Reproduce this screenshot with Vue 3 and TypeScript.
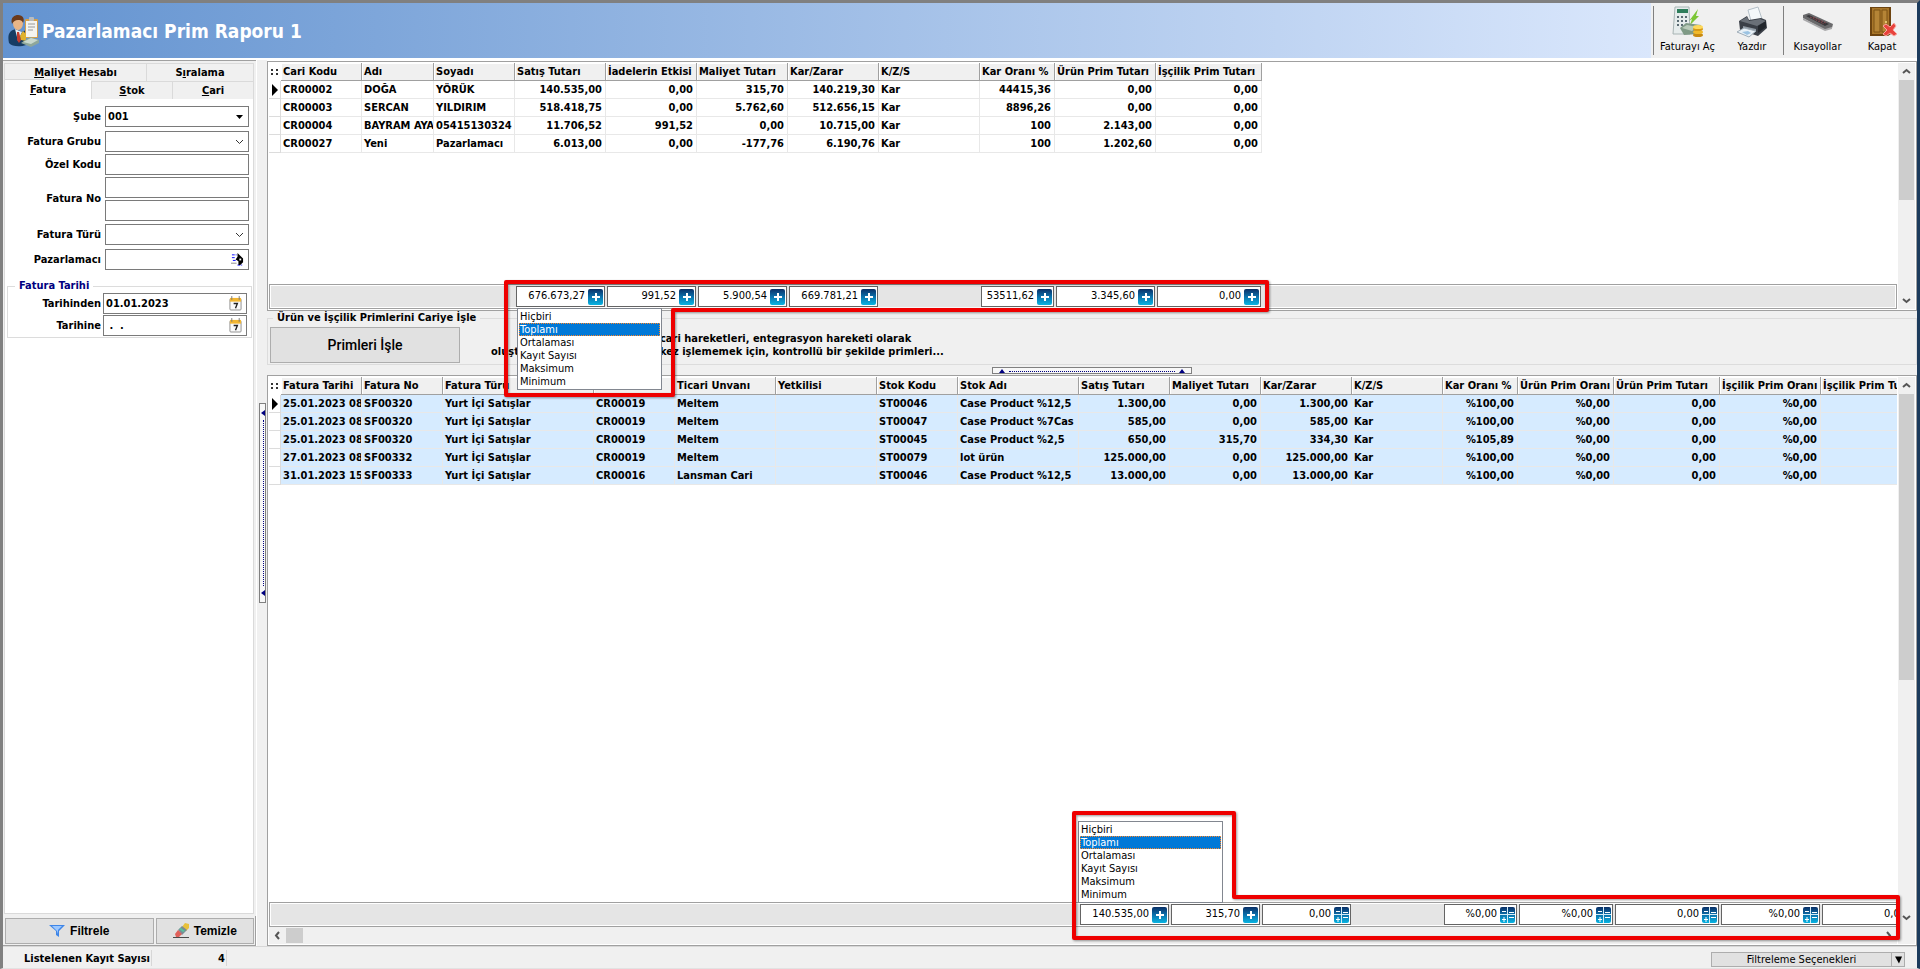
<script setup lang="ts">
import { ref } from 'vue'

interface Column {
  title: string
  width: number
  numeric?: boolean
  total?: string
  mode?: 'sum' | 'none'
}

const summaryOptions: string[] = ['Hiçbiri', 'Toplamı', 'Ortalaması', 'Kayıt Sayısı', 'Maksimum', 'Minimum']
const upperSummary = ref('Toplamı')
const lowerSummary = ref('Toplamı')
const branch = ref('001')
const startDate = ref('01.01.2023')
const endDate = ref(' .  .')

const sellerColumns: Column[] = [
  { title: 'Cari Kodu', width: 81 },
  { title: 'Adı', width: 72 },
  { title: 'Soyadı', width: 81 },
  { title: 'Satış Tutarı', width: 91, numeric: true, total: '676.673,27', mode: 'sum' },
  { title: 'İadelerin Etkisi', width: 91, numeric: true, total: '991,52', mode: 'sum' },
  { title: 'Maliyet Tutarı', width: 91, numeric: true, total: '5.900,54', mode: 'sum' },
  { title: 'Kar/Zarar', width: 91, numeric: true, total: '669.781,21', mode: 'sum' },
  { title: 'K/Z/S', width: 101 },
  { title: 'Kar Oranı %', width: 75, numeric: true, total: '53511,62', mode: 'sum' },
  { title: 'Ürün Prim Tutarı', width: 101, numeric: true, total: '3.345,60', mode: 'sum' },
  { title: 'İşçilik Prim Tutarı', width: 106, numeric: true, total: '0,00', mode: 'sum' },
]

const sellerRows: string[][] = [
  ['CR00002', 'DOĞA', 'YÖRÜK', '140.535,00', '0,00', '315,70', '140.219,30', 'Kar', '44415,36', '0,00', '0,00'],
  ['CR00003', 'SERCAN', 'YILDIRIM', '518.418,75', '0,00', '5.762,60', '512.656,15', 'Kar', '8896,26', '0,00', '0,00'],
  ['CR00004', 'BAYRAM AYAZ', '05415130324', '11.706,52', '991,52', '0,00', '10.715,00', 'Kar', '100', '2.143,00', '0,00'],
  ['CR00027', 'Yeni', 'Pazarlamacı', '6.013,00', '0,00', '-177,76', '6.190,76', 'Kar', '100', '1.202,60', '0,00'],
]

const invoiceColumns: Column[] = [
  { title: 'Fatura Tarihi', width: 81 },
  { title: 'Fatura No', width: 81 },
  { title: 'Fatura Türü', width: 151 },
  { title: 'Cari Kodu', width: 81 },
  { title: 'Ticari Unvanı', width: 101 },
  { title: 'Yetkilisi', width: 101 },
  { title: 'Stok Kodu', width: 81 },
  { title: 'Stok Adı', width: 121 },
  { title: 'Satış Tutarı', width: 91, numeric: true, total: '140.535,00', mode: 'sum' },
  { title: 'Maliyet Tutarı', width: 91, numeric: true, total: '315,70', mode: 'sum' },
  { title: 'Kar/Zarar', width: 91, numeric: true, total: '0,00', mode: 'none' },
  { title: 'K/Z/S', width: 91 },
  { title: 'Kar Oranı %', width: 75, numeric: true, total: '%0,00', mode: 'none' },
  { title: 'Ürün Prim Oranı', width: 96, numeric: true, total: '%0,00', mode: 'none' },
  { title: 'Ürün Prim Tutarı', width: 106, numeric: true, total: '0,00', mode: 'none' },
  { title: 'İşçilik Prim Oranı', width: 101, numeric: true, total: '%0,00', mode: 'none' },
  { title: 'İşçilik Prim Tutarı', width: 106, numeric: true, total: '0,00', mode: 'none' },
]

const invoiceRows: string[][] = [
  ['25.01.2023 08:51', 'SF00320', 'Yurt İçi Satışlar', 'CR00019', 'Meltem', '', 'ST00046', 'Case Product %12,5', '1.300,00', '0,00', '1.300,00', 'Kar', '%100,00', '%0,00', '0,00', '%0,00', '0,00'],
  ['25.01.2023 08:51', 'SF00320', 'Yurt İçi Satışlar', 'CR00019', 'Meltem', '', 'ST00047', 'Case Product %7Cas', '585,00', '0,00', '585,00', 'Kar', '%100,00', '%0,00', '0,00', '%0,00', '0,00'],
  ['25.01.2023 08:51', 'SF00320', 'Yurt İçi Satışlar', 'CR00019', 'Meltem', '', 'ST00045', 'Case Product %2,5', '650,00', '315,70', '334,30', 'Kar', '%105,89', '%0,00', '0,00', '%0,00', '0,00'],
  ['27.01.2023 08:51', 'SF00332', 'Yurt İçi Satışlar', 'CR00019', 'Meltem', '', 'ST00079', 'lot ürün', '125.000,00', '0,00', '125.000,00', 'Kar', '%100,00', '%0,00', '0,00', '%0,00', '0,00'],
  ['31.01.2023 15:20', 'SF00333', 'Yurt İçi Satışlar', 'CR00016', 'Lansman Cari', '', 'ST00046', 'Case Product %12,5', '13.000,00', '0,00', '13.000,00', 'Kar', '%100,00', '%0,00', '0,00', '%0,00', '0,00'],
]

const grids = [
  { id: 'sellers', columns: sellerColumns, rows: sellerRows },
  { id: 'invoices', columns: invoiceColumns, rows: invoiceRows },
]

function tableWidth(columns: Column[]): number {
  return columns.reduce((sum, c) => sum + c.width, 12)
}
</script>

<template>
  <div class="window">
    <header class="titlebar">
      <div class="caption">
        <svg class="caption-icon" viewBox="0 0 32 32" aria-hidden="true">
          <path d="M1 28c-2-9 1-13 7-14l6 3 4-2v15c-5 2-14 2-17-2z" fill="#173c63" />
          <path d="M7 14l3 12 4-9z" fill="#e8edf2" />
          <path d="M9 17h2l2 8-2 3-2-3z" fill="#c23b2e" />
          <ellipse cx="10" cy="8" rx="5" ry="7" fill="#e9b587" />
          <path d="M4 9C2 2 7 0 10 0c5 0 7 4 5 8-1-3-3-3-5-3-3 0-4 1-6 4z" fill="#6b3a1b" />
          <rect x="17" y="4" width="13" height="19" rx="1" fill="#d6a04a" />
          <rect x="18" y="6" width="11" height="16" fill="#f4f4f0" />
          <rect x="21" y="2" width="5" height="4" rx="1" fill="#b8bcc0" />
          <path d="M20 9h7M20 12h7M20 15h5" stroke="#9a9a9a" />
          <path d="M12 21l3-5 3 3v7l-5-1z" fill="#e0b22c" />
          <path d="M13 28l9-6 9 3v3l-8 4z" fill="#8fa79a" />
          <path d="M15 27l8-4 7 2-7 4z" fill="#c9d8ce" />
        </svg>
        <h1>Pazarlamacı Prim Raporu 1</h1>
      </div>
      <nav class="toolbar">
        <button type="button" class="tool first">
          <svg viewBox="0 0 32 32" aria-hidden="true">
            <path d="M3 1h14l1 27H1z" fill="#e6ecec" stroke="#a8b4b4" />
            <rect x="5" y="3" width="11" height="4" fill="#2e7d5b" />
            <path d="M5 11h2M9 11h2M13 11h2M5 15h2M9 15h2M13 15h2M5 19h2M9 19h2" stroke="#5b6b73" stroke-width="2" />
            <path d="M17 15l9-12-2 7h3l-9 9 2-6z" fill="#7cc636" />
            <path d="M8 22l6-5 15 2-3 9-14 1z" fill="#7f9a86" />
            <path d="M10 22l5-3 10 2-5 4z" fill="#b9cbb9" />
            <ellipse cx="26" cy="29" rx="5" ry="2" fill="#c88a10" />
            <ellipse cx="26" cy="26" rx="5" ry="2" fill="#f0b92a" />
            <ellipse cx="26" cy="23" rx="5" ry="2" fill="#d79a16" />
            <ellipse cx="26" cy="21" rx="5" ry="2" fill="#ffd95a" />
          </svg>
          <span>Faturayı Aç</span>
        </button>
        <button type="button" class="tool">
          <svg viewBox="0 0 32 32" aria-hidden="true">
            <path d="M12 4l10-3 4 12-11 2z" fill="#f4f8fa" stroke="#b5c0c8" />
            <path d="M3 15l8-5 2 4 12-2 5 2 1 8-9 8-18-6z" fill="#3a3f47" />
            <path d="M4 15l7-4 2 4 11-2 6 2-9 5z" fill="#6a7078" />
            <path d="M22 20l8-5v6l-8 6z" fill="#22262c" />
            <path d="M7 20l13 3v2L7 22z" fill="#8f98a2" />
            <path d="M1 26l7-4 12 3-7 6z" fill="#e9f1f7" stroke="#9fadb8" />
            <path d="M6 26l6-1 3 2-4 2z" fill="#9cc3e2" />
          </svg>
          <span>Yazdır</span>
        </button>
        <button type="button" class="tool apart">
          <svg viewBox="0 0 32 32" aria-hidden="true">
            <path d="M1 9l6-2 24 11-1 4-7 2L1 12z" fill="#6a6a6c" />
            <path d="M4 10l3-1 20 9-4 2z" fill="#37373a" />
            <path d="M8 11l14 7M11 11l13 6" stroke="#8a4a50" stroke-dasharray="2 1" />
            <path d="M1 12l22 11 7-2v2l-7 2L1 14z" fill="#a9a9ab" />
          </svg>
          <span>Kısayollar</span>
        </button>
        <button type="button" class="tool">
          <svg viewBox="0 0 32 32" aria-hidden="true">
            <path d="M4 1h21v27l-3 2H4z" fill="#6d4410" />
            <path d="M6 2h17v26H6z" fill="#a8762a" />
            <path d="M8 4h6v22H8zM16 4h5v22h-5z" fill="#b58436" stroke="#7c5215" />
            <circle cx="20" cy="16" r="1" fill="#f4dc84" />
            <path d="M17 20l3-2 4 3 4-4 2 3-3 4 4 4-3 2-4-3-4 3-3-2 4-4z" fill="#e8433c" stroke="#f8a49e" />
          </svg>
          <span>Kapat</span>
        </button>
      </nav>
    </header>

    <main class="body">
      <aside class="filters">
        <div class="tabs" role="tablist">
          <div class="tab-row">
            <button type="button" role="tab" class="tab wide"><u>M</u>aliyet Hesabı</button>
            <button type="button" role="tab" class="tab">S<u>ı</u>ralama</button>
          </div>
          <div class="tab-row">
            <button type="button" role="tab" class="tab active" aria-selected="true"><u>F</u>atura</button>
            <button type="button" role="tab" class="tab"><u>S</u>tok</button>
            <button type="button" role="tab" class="tab"><u>C</u>ari</button>
          </div>
        </div>
        <form class="sheet" @submit.prevent>
          <div class="field">
            <label for="sube">Şube</label>
            <div class="box">
              <select id="sube" v-model="branch"><option>001</option></select>
              <svg class="arrow" viewBox="0 0 9 9" aria-hidden="true"><path d="M1 3h7L4.500 7z" fill="#000" /></svg>
            </div>
          </div>
          <div class="field spaced">
            <label for="grup">Fatura Grubu</label>
            <div class="box">
              <select id="grup"><option></option></select>
              <svg class="arrow" viewBox="0 0 9 9" aria-hidden="true"><path d="M1 3l3.500 3.500L8 3" fill="none" stroke="#333" /></svg>
            </div>
          </div>
          <div class="field">
            <label for="ozel">Özel Kodu</label>
            <div class="box"><input id="ozel" type="text" /></div>
          </div>
          <div class="field range">
            <label for="no1">Fatura No</label>
            <div class="pair">
              <div class="box"><input id="no1" type="text" /></div>
              <div class="box"><input type="text" aria-label="Fatura No" /></div>
            </div>
          </div>
          <div class="field">
            <label for="turu">Fatura Türü</label>
            <div class="box">
              <select id="turu"><option></option></select>
              <svg class="arrow" viewBox="0 0 9 9" aria-hidden="true"><path d="M1 3l3.500 3.500L8 3" fill="none" stroke="#333" /></svg>
            </div>
          </div>
          <div class="field spaced">
            <label for="pazarlamaci">Pazarlamacı</label>
            <div class="box">
              <input id="pazarlamaci" type="text" />
              <button type="button" class="inner" aria-label="Seç">
                <svg viewBox="0 0 14 14" aria-hidden="true">
                  <path d="M1 2h5M1 5h3M2 8h3M7 13h5" stroke="#00f" stroke-dasharray="3 1" />
                  <path d="M0 11h6" stroke="#888" />
                  <path d="M7 0l3 3 3 3v4l-3 3H8V9L5 7l2-3z" fill="#000" />
                  <path d="M9 6h2v2H9z" fill="#fff" />
                </svg>
              </button>
            </div>
          </div>
          <fieldset class="dates">
            <legend>Fatura Tarihi</legend>
            <div class="field">
              <label for="from">Tarihinden</label>
              <div class="box">
                <input id="from" v-model="startDate" type="text" />
                <button type="button" class="inner" aria-label="Takvim">
                  <svg viewBox="0 0 14 16" aria-hidden="true">
                    <rect x="1" y="3" width="12" height="12" rx="1" fill="#fafafa" stroke="#8b8b8b" />
                    <path d="M1 2h12v4H1z" fill="#f2b632" />
                    <path d="M3 0v4M11 0v4" stroke="#777" />
                    <path d="M5 8h4L7 13" fill="none" stroke="#222" stroke-width="1.500" />
                  </svg>
                </button>
              </div>
            </div>
            <div class="field">
              <label for="to">Tarihine</label>
              <div class="box">
                <input id="to" v-model="endDate" type="text" />
                <button type="button" class="inner" aria-label="Takvim">
                  <svg viewBox="0 0 14 16" aria-hidden="true">
                    <rect x="1" y="3" width="12" height="12" rx="1" fill="#fafafa" stroke="#8b8b8b" />
                    <path d="M1 2h12v4H1z" fill="#f2b632" />
                    <path d="M3 0v4M11 0v4" stroke="#777" />
                    <path d="M5 8h4L7 13" fill="none" stroke="#222" stroke-width="1.500" />
                  </svg>
                </button>
              </div>
            </div>
          </fieldset>
        </form>
        <div class="actions">
          <button type="button" class="action filter">
            <svg viewBox="0 0 16 16" aria-hidden="true">
              <path d="M0 2h16l-6 6v6l-3-2V8z" fill="#3f86e8" />
              <path d="M3 3h10L9 7v4L8 8z" fill="#9cc8ff" />
            </svg>
            Filtrele
          </button>
          <button type="button" class="action">
            <svg viewBox="0 0 16 16" aria-hidden="true">
              <path d="M0 14h16v1H0z" fill="#4a4a4a" />
              <path d="M12 0l4 1v4l-3 3-4-4z" fill="#e8c13a" />
              <path d="M9 3l5 4-5 5-4-5z" fill="#7c8a94" />
              <path d="M8 5l4 3-2 1-4-3z" fill="#57c4a0" />
              <path d="M5 7l4 4-3 3H3l-1-3z" fill="#e0605a" />
            </svg>
            Temizle
          </button>
        </div>
      </aside>

      <div class="splitter">
        <button type="button" class="grip upright" aria-label="Paneli gizle">
          <svg viewBox="0 0 4 6" aria-hidden="true"><path d="M4 0v6L0 3z" fill="#000080" /></svg>
          <i></i>
          <svg viewBox="0 0 4 6" aria-hidden="true"><path d="M4 0v6L0 3z" fill="#000080" /></svg>
        </button>
      </div>

      <div class="content">
        <section v-for="grid in grids" :key="grid.id" class="grid-panel" :class="grid.id">
          <div class="grid-main">
            <div class="viewport">
              <table :style="{ width: tableWidth(grid.columns) + 'px' }">
                <colgroup>
                  <col class="mark-col" />
                  <col v-for="c in grid.columns" :key="c.title" :style="{ width: c.width + 'px' }" />
                </colgroup>
                <thead>
                  <tr>
                    <th class="corner">
                      <svg viewBox="0 0 8 8" aria-hidden="true">
                        <path d="M0 1h2v2H0zM5 1h2v2H5zM0 5h2v2H0zM5 5h2v2H5z" fill="#333" />
                      </svg>
                    </th>
                    <th v-for="c in grid.columns" :key="c.title" scope="col">{{ c.title }}</th>
                  </tr>
                </thead>
                <tbody>
                  <tr v-for="(row, r) in grid.rows" :key="r">
                    <td class="mark">
                      <svg v-if="r === 0" viewBox="0 0 6 12" aria-hidden="true"><path d="M0 0l6 6-6 6z" fill="#000" /></svg>
                    </td>
                    <td v-for="(cell, i) in row" :key="i" :class="{ num: grid.columns[i].numeric }">{{ cell }}</td>
                  </tr>
                </tbody>
              </table>
            </div>
            <div class="totals">
              <div v-for="c in grid.columns" :key="c.title" class="total-cell" :style="{ width: c.width + 'px' }">
                <div v-if="c.total" class="total">
                  <input type="text" :value="c.total" :aria-label="c.title" readonly />
                  <button type="button" :aria-label="c.title + ' özeti'">
                    <svg viewBox="0 0 15 16" aria-hidden="true">
                      <defs>
                        <linearGradient id="tile" x1="0" y1="0" x2="0" y2="1">
                          <stop offset="0" stop-color="#0a2f66" />
                          <stop offset="0.5" stop-color="#0b73ae" />
                          <stop offset="1" stop-color="#08b4e2" />
                        </linearGradient>
                      </defs>
                      <rect width="15" height="16" rx="2" fill="url(#tile)" />
                      <path v-if="c.mode === 'sum'" d="M4 8h8M8 4v8" stroke="#fff" stroke-width="2" />
                      <g v-else stroke="#fff">
                        <path d="M0 7.500h15M7.500 0v16" stroke="#d4ecf6" />
                        <path d="M2 4.500h4M2 12.500h4M4 10v5M9 5.500h5M9 10.500h5" />
                      </g>
                    </svg>
                  </button>
                </div>
              </div>
            </div>
            <div v-if="grid.id === 'invoices'" class="hbar">
              <svg viewBox="0 0 9 9" aria-hidden="true"><path d="M6 1L3 4.500 6 8" fill="none" stroke="#555" stroke-width="2" /></svg>
              <i></i>
              <svg viewBox="0 0 9 9" aria-hidden="true"><path d="M3 1l3 3.500L3 8" fill="none" stroke="#555" stroke-width="2" /></svg>
            </div>
          </div>
          <div class="vbar">
            <svg viewBox="0 0 9 9" aria-hidden="true"><path d="M1 6l3.500-3L8 6" fill="none" stroke="#555" stroke-width="2" /></svg>
            <i></i>
            <svg viewBox="0 0 9 9" aria-hidden="true"><path d="M1 3l3.500 3L8 3" fill="none" stroke="#555" stroke-width="2" /></svg>
          </div>
          <template v-if="grid.id === 'sellers'">
            <svg class="callout" viewBox="0 0 768 120" aria-hidden="true">
              <path d="M3 3H764V31H170V116H3z" />
            </svg>
            <select v-model="upperSummary" class="popup" size="6" aria-label="Özet türü">
              <option v-for="o in summaryOptions" :key="o">{{ o }}</option>
            </select>
          </template>
          <template v-else>
            <svg class="callout" viewBox="0 0 830 130" aria-hidden="true">
              <path d="M3 3H163V87H827V128H3z" />
            </svg>
            <select v-model="lowerSummary" class="popup" size="6" aria-label="Özet türü">
              <option v-for="o in summaryOptions" :key="o">{{ o }}</option>
            </select>
          </template>
        </section>

        <section class="commission">
          <fieldset>
            <legend>Ürün ve İşçilik Primlerini Cariye İşle</legend>
            <button type="button" class="run">Primleri İşle</button>
            <p class="lead">oluşt</p>
            <p class="note">cari hareketleri, entegrasyon hareketi olarak<br />kez işlememek için, kontrollü bir şekilde primleri...</p>
          </fieldset>
          <button type="button" class="grip flat" aria-label="Alt paneli genişlet">
            <svg viewBox="0 0 6 4" aria-hidden="true"><path d="M0 4h6L3 0z" fill="#000080" /></svg>
            <i></i>
            <svg viewBox="0 0 6 4" aria-hidden="true"><path d="M0 4h6L3 0z" fill="#000080" /></svg>
          </button>
        </section>
      </div>
    </main>

    <footer class="status">
      <span class="cell count-label">Listelenen Kayıt Sayısı</span>
      <span class="cell count">4</span>
      <button type="button" class="options">
        <span>Filtreleme Seçenekleri</span>
        <svg viewBox="0 0 12 12" aria-hidden="true"><path d="M3 3h7l-3 7z" fill="#000" /></svg>
      </button>
    </footer>
  </div>
</template>

<style>
body {
  margin: 0;
}
</style>

<style scoped>
* {
  box-sizing: border-box;
}
.window {
  height: 100vh;
  min-height: 640px;
  display: flex;
  flex-direction: column;
  overflow: hidden;
  background: #f0f0f0;
  border-style: solid;
  border-width: 3px 3px 1px;
  border-color: #808080 #1c3b5c #e2e2e2 #808080;
  font: bold 11px/14px "DejaVu Sans Condensed", "Noto Sans", sans-serif;
  color: #000;
}
button,
input,
select {
  font: inherit;
  color: inherit;
  margin: 0;
  padding: 0;
  border: 0;
  border-radius: 0;
  background: none;
}
svg {
  display: block;
  flex: none;
}

.titlebar {
  flex: 0 0 55px;
  display: flex;
}
.caption {
  flex: 1;
  display: flex;
  align-items: center;
  gap: 2px;
  padding-left: 5px;
  background: linear-gradient(90deg, #6393d0, #dae7fc);
}
.caption-icon {
  width: 32px;
  height: 32px;
}
h1 {
  margin: 0;
  font-size: 19px;
  line-height: 24px;
  color: #fff;
}
.toolbar {
  display: flex;
  align-items: center;
  padding: 0 4px 0 2px;
}
.tool {
  width: 62px;
  height: 49px;
  display: flex;
  flex-direction: column;
  align-items: center;
  gap: 2px;
  font-weight: normal;
  font-size: 11px;
  white-space: nowrap;
}
.tool.first,
.tool.apart {
  width: 68px;
  border-left: 1px solid #808080;
}
.tool svg {
  width: 32px;
  height: 32px;
}

.body {
  flex: 1;
  min-height: 0;
  display: flex;
  padding-top: 2px;
  background: #fff;
}
.filters {
  flex: 0 0 253px;
  min-width: 0;
  display: flex;
  flex-direction: column;
  background: #f0f0f0;
  border-top: 1px solid #a0a0a0;
}
.tabs {
  padding: 2px 2px 0 1px;
}
.tab-row {
  display: flex;
  height: 18px;
}
.tab {
  flex: 1;
  border: 1px solid #dadada;
  border-width: 1px 0 0 1px;
}
.tab:last-child {
  border-right-width: 1px;
}
.tab.wide {
  flex: 0 0 142px;
}
.tab.active {
  flex: 0 0 87px;
  height: 20px;
  margin-top: -2px;
  background: #fff;
}
.sheet {
  flex: 1;
  margin: 0 2px 0 1px;
  padding: 7px 4px 0;
  background: #fff;
  border: 1px solid #dadada;
  border-width: 0 1px 1px;
}
.field {
  display: flex;
  align-items: center;
  margin-bottom: 2px;
}
.field.spaced {
  margin-top: 4px;
}
.field.range {
  margin-bottom: 3px;
}
.field label {
  flex: 0 0 92px;
  text-align: right;
}
.field > .box,
.pair {
  flex: 1;
  min-width: 0;
  margin-left: 4px;
}
.box {
  position: relative;
  height: 21px;
  display: flex;
  align-items: center;
  border: 1px solid #7a7a7a;
  background: #fff;
}
.pair {
  display: flex;
  flex-direction: column;
  gap: 2px;
}
.box input,
.box select {
  flex: 1;
  width: 0;
  min-width: 0;
  height: 19px;
  padding: 0 2px;
  appearance: none;
  outline: 0;
}
.arrow {
  position: absolute;
  right: 4px;
  width: 9px;
  height: 9px;
  pointer-events: none;
}
.inner {
  flex: none;
  margin-right: 4px;
}
.inner svg {
  width: 13px;
  height: 15px;
}
.dates {
  min-width: 0;
  margin: 9px -3px 0 -2px;
  padding: 0 4px 0 3px;
  border: 1px solid #dcdcdc;
}
.dates legend {
  margin-left: 4px;
  padding: 0 4px;
  color: #000080;
}
.dates .field {
  margin-bottom: 1px;
}
.dates .field label {
  flex-basis: 90px;
}
.dates .field > .box {
  margin-left: 2px;
}
.actions {
  display: flex;
  gap: 2px;
  margin-top: 2px;
  padding: 2px 1px 1px 2px;
  border: 1px solid #a0a0a0;
  border-width: 0 1px 1px 0;
}
.action {
  flex: 98;
  height: 26px;
  display: flex;
  align-items: center;
  justify-content: center;
  gap: 5px;
  border: 1px solid #adadad;
  background: #e1e1e1;
  font: bold 12px/14px "Liberation Sans", Arial, sans-serif;
}
.action.filter {
  flex: 149;
}
.action svg {
  width: 16px;
  height: 16px;
}

.splitter {
  flex: 0 0 11px;
  display: flex;
  flex-direction: column;
  align-items: center;
  background: #f0f0f0;
  border-left: 1px solid #fff;
  padding-top: 343px;
}
.grip {
  display: flex;
  align-items: center;
  border: 1px solid #808080;
  background: #f8f8f8;
}
.upright {
  width: 7px;
  height: 200px;
  flex-direction: column;
  align-items: flex-end;
  padding: 6px 0;
}
.upright svg {
  width: 4px;
  height: 6px;
}
.upright i {
  flex: 1;
  margin: 4px 1px;
  border-left: 1px dotted #000080;
}
.flat {
  width: 200px;
  height: 7px;
  align-items: flex-end;
  padding: 0 6px;
}
.flat svg {
  width: 6px;
  height: 4px;
}
.flat i {
  flex: 1;
  margin: 1px 4px;
  border-top: 1px dotted #000080;
}

.content {
  flex: 1;
  min-width: 0;
  margin-top: 1px;
  display: flex;
  flex-direction: column;
  background: #f0f0f0;
}
.grid-panel {
  position: relative;
  display: flex;
  gap: 1px;
  padding: 1px;
  border: 1px solid #a0a0a0;
  background: #fff;
}
.grid-panel.sellers {
  order: 1;
  flex: 0 0 250px;
  z-index: 2;
}
.commission {
  order: 2;
  flex: 0 0 64px;
}
.grid-panel.invoices {
  order: 3;
  flex: 1;
  min-height: 0;
}
.grid-main {
  flex: 1;
  min-width: 0;
  display: flex;
  flex-direction: column;
}
.viewport {
  flex: 1;
  min-height: 0;
  overflow: hidden;
}
table {
  table-layout: fixed;
  border-collapse: separate;
  border-spacing: 0;
}
.mark-col {
  width: 12px;
}
th,
td {
  height: 18px;
  padding: 0 2px;
  line-height: 17px;
  white-space: nowrap;
  overflow: hidden;
  text-align: left;
  border-right: 1px solid #e8e8e8;
  border-bottom: 1px solid #e8e8e8;
}
th {
  background: #f0f0f0;
  border-right-color: #a0a0a0;
  border-bottom-color: #a0a0a0;
  box-shadow: inset 1px 1px #fff;
}
td.num {
  text-align: right;
  padding-right: 3px;
}
.invoices td {
  background: #d6ebff;
}
th.corner {
  padding: 0 2px;
  background: #fff;
  border-color: #fff;
}
.corner svg {
  width: 8px;
  height: 8px;
}
table td.mark {
  padding: 0 3px;
  background: #fff;
  border-color: #dcdcdc;
}
.mark svg {
  width: 6px;
  height: 12px;
}

.totals {
  flex: none;
  height: 25px;
  display: flex;
  overflow: hidden;
  padding: 1px 1px 1px 11px;
  background: #e5e5e5;
  border: 1px solid #a0a0a0;
  box-shadow: inset 0 0 0 1px #fff;
}
.total-cell {
  flex: none;
  padding: 0 1px;
}
.total {
  height: 21px;
  display: flex;
  align-items: center;
  border: 1px solid #646464;
  background: #fff;
  padding-right: 1px;
}
.total input {
  flex: 1;
  min-width: 0;
  height: 17px;
  padding: 0 3px 2px 0;
  font-weight: normal;
  text-align: right;
  outline: 0;
}
.total svg {
  width: 15px;
  height: 16px;
}
.vbar {
  flex: 0 0 17px;
  display: flex;
  flex-direction: column;
  align-items: center;
  padding: 4px 0;
  background: #f0f0f0;
}
.vbar i {
  width: 15px;
  height: 120px;
  margin: 4px 0 auto;
  background: #cdcdcd;
}
.invoices .vbar i {
  height: 286px;
}
.invoices .vbar {
  padding-bottom: 22px;
}
.vbar svg,
.hbar svg {
  width: 9px;
  height: 9px;
}
.hbar {
  height: 17px;
  display: flex;
  align-items: center;
  padding: 0 4px;
  background: #f0f0f0;
}
.hbar i {
  width: 17px;
  height: 15px;
  margin: 0 auto 0 4px;
  background: #cdcdcd;
}

.callout {
  position: absolute;
  z-index: 3;
  pointer-events: none;
  filter: drop-shadow(1px 1px 1px #00000066);
}
.callout path {
  fill: none;
  stroke: #ee0000;
  stroke-width: 4px;
  stroke-linejoin: round;
}
.sellers .callout {
  left: 235px;
  top: 217px;
  width: 768px;
  height: 120px;
}
.invoices .callout {
  left: 803px;
  bottom: 5px;
  width: 830px;
  height: 130px;
}
.popup {
  position: absolute;
  z-index: 2;
  width: 145px;
  height: 82px;
  padding: 1px;
  overflow: hidden;
  appearance: none;
  border: 1px solid #828790;
  background: #fff;
  font-weight: normal;
  outline: 0;
}
.popup option {
  height: 13px;
  min-height: 13px;
  padding: 0 1px;
  line-height: 13px;
}
.popup option:checked {
  color: #fff;
  background: linear-gradient(#0078d7, #0078d7);
  outline: 1px dotted #ff8728;
  outline-offset: -1px;
}
.sellers .popup {
  left: 249px;
  top: 246px;
}
.invoices .popup {
  left: 810px;
  bottom: 42px;
}

.commission {
  display: flex;
  flex-direction: column;
  align-items: center;
}
.commission fieldset {
  align-self: stretch;
  height: 54px;
  min-width: 0;
  margin: 0;
  padding: 0 2px;
  border: 1px solid #dcdcdc;
  display: flex;
  align-items: flex-start;
}
.commission legend {
  margin-left: 3px;
  padding: 0 4px;
}
.run {
  flex: 0 0 190px;
  height: 36px;
  margin-top: 2px;
  border: 1px solid #adadad;
  background: #e1e1e1;
  font: 500 14px/18px Roboto, "Liberation Sans", sans-serif;
}
.commission p {
  margin: 7px 0 0;
  line-height: 13px;
  white-space: nowrap;
}
.commission .lead {
  flex: 0 0 169px;
  margin: 20px 0 0 31px;
}
.flat {
  margin-top: 2px;
}

.status {
  flex: 0 0 22px;
  display: flex;
  align-items: center;
  border-top: 1px solid #d7d7d7;
  padding-right: 12px;
}
.cell {
  height: 16px;
  line-height: 18px;
  padding-right: 1px;
  text-align: right;
  border-right: 1px solid #d7d7d7;
}
.count-label {
  width: 149px;
}
.count {
  width: 75px;
}
.options {
  width: 194px;
  height: 15px;
  margin: 3px 0 0 auto;
  display: flex;
  align-items: center;
  border: 1px solid #adadad;
  background: #e1e1e1;
  font-weight: normal;
  line-height: 13px;
}
.options span {
  flex: 1;
}
.options svg {
  width: 13px;
  height: 13px;
  border-left: 1px solid #adadad;
}
</style>
